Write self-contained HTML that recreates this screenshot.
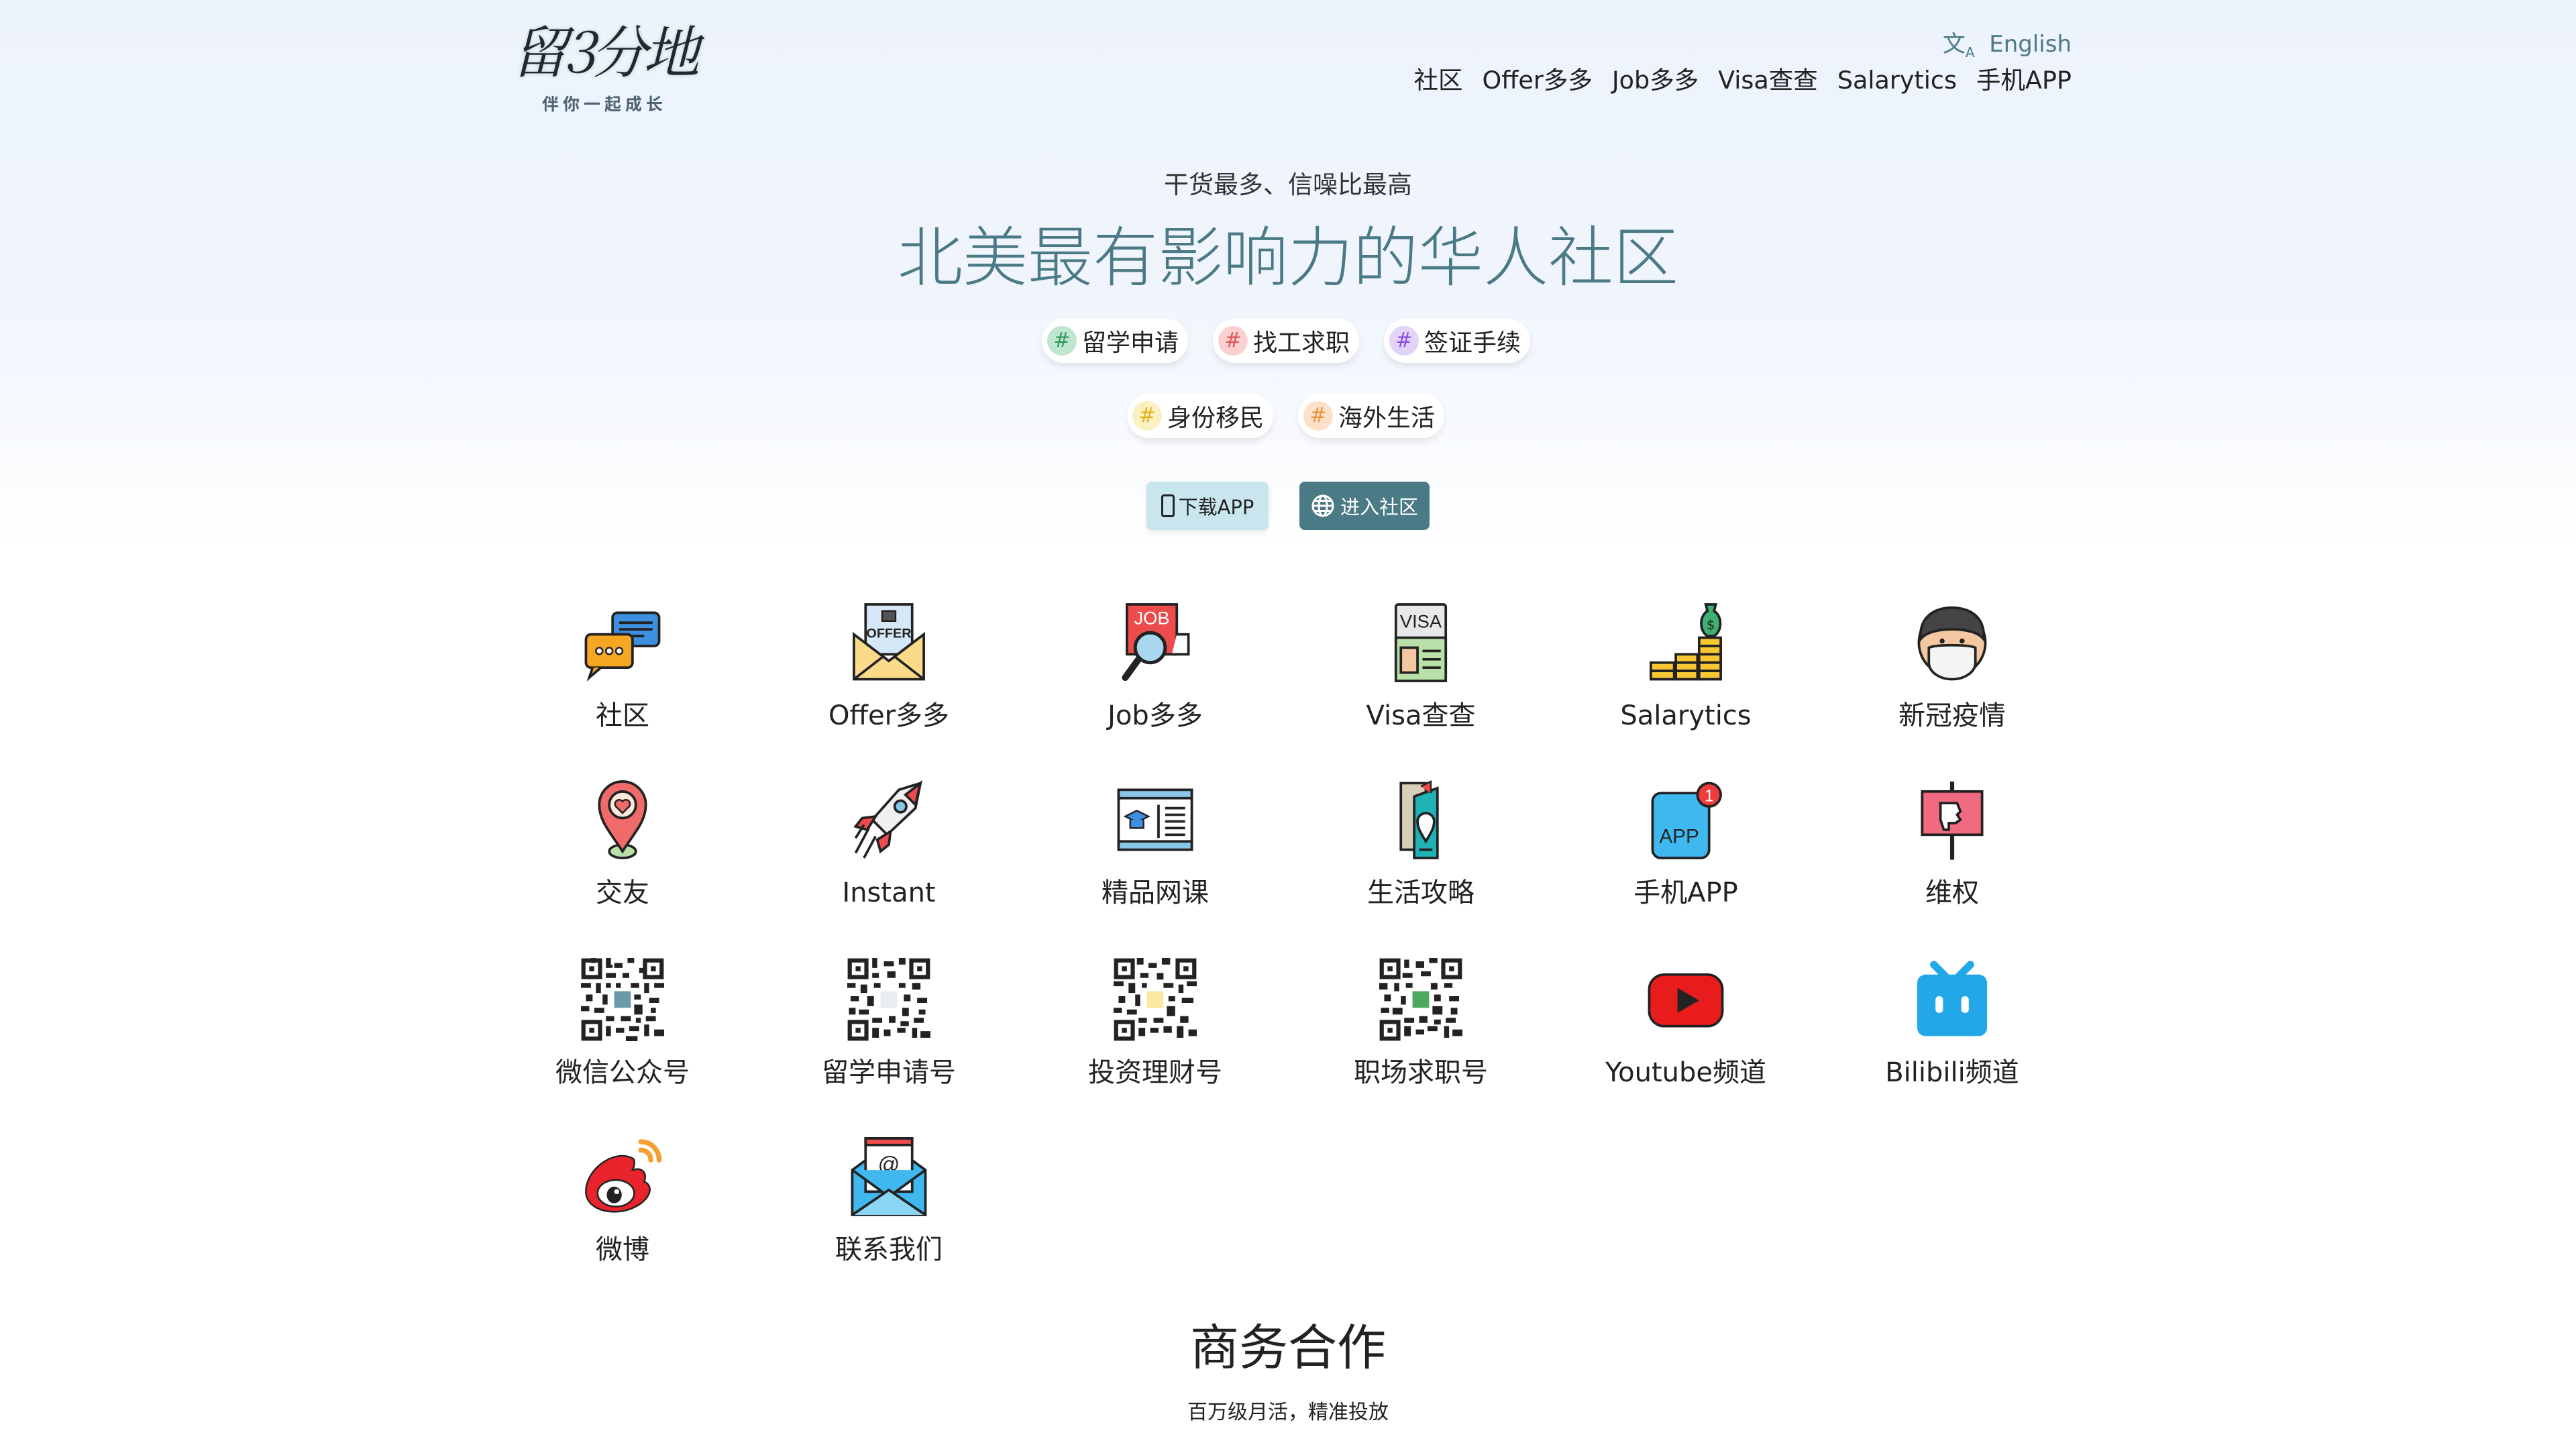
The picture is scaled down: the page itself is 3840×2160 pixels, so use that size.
<!DOCTYPE html>
<html><head><meta charset="utf-8">
<style>
*{margin:0;padding:0;box-sizing:border-box}
body{width:3840px;height:2160px;overflow:hidden;font-family:"DejaVu Sans","Liberation Sans","Noto Sans CJK SC",sans-serif;color:#222;background:linear-gradient(180deg,#edf3fd 0px,#f0f5fd 450px,#ffffff 820px,#fff 2160px);position:relative}
.abs{position:absolute}
.c{position:absolute;transform:translateX(-50%);white-space:nowrap;text-align:center}
.nav{position:absolute;right:752px;top:90px;font-size:36.5px;color:#222;white-space:nowrap}
.nav span{margin-left:29px}
.pill{position:absolute;height:66px;border-radius:33px;background:#fff;box-shadow:0 6px 10px rgba(0,0,0,.08);font-size:36px;display:flex;align-items:center;padding:0 14px 0 8px;white-space:nowrap;color:#222}
.pill i{font-style:normal;display:inline-block;width:44px;height:44px;border-radius:50%;font-size:30px;line-height:44px;text-align:center;margin-right:8px}
.item{position:absolute;width:396px;margin-left:-198px;text-align:center}
.item svg{width:124px;height:124px;display:block;margin:0 auto}
.item div{font-size:40px;margin-top:17px;height:60px;line-height:60px;color:#222;white-space:nowrap}
</style></head><body>

<div class="abs" style="left:762px;top:18px;width:290px;height:110px;white-space:nowrap;font-family:'Noto Serif CJK SC',serif;font-size:84px;line-height:110px;color:#1e2a30;font-style:italic;letter-spacing:-6px;text-shadow:0 0 6px #b9c8d0">留3分地</div>
<div class="abs" style="left:808px;top:136px;white-space:nowrap;font-size:25px;color:#4e6470;font-weight:bold;letter-spacing:6px;font-family:'Noto Sans CJK SC',sans-serif">伴你一起成长</div>

<div class="abs" style="right:752px;top:38px;font-size:34px;color:#4a7a85;white-space:nowrap">文<sub style="font-size:20px">A</sub>&nbsp; English</div>
<div class="nav">社区<span>Offer多多</span><span>Job多多</span><span>Visa查查</span><span>Salarytics</span><span>手机APP</span></div>

<div class="c" style="left:1920px;top:245px;font-size:37px;color:#333">干货最多、信噪比最高</div>
<div class="c" style="left:1920px;top:318px;font-size:97px;color:#4a7a85;line-height:1.2;font-family:'Noto Sans CJK SC',sans-serif;font-weight:300">北美最有影响力的华人社区</div>

<div class="pill" style="left:1553px;top:475px"><i style="background:#bfe6cf;color:#2e9b5c">#</i>留学申请</div>
<div class="pill" style="left:1808px;top:475px"><i style="background:#fbd0d0;color:#e05555">#</i>找工求职</div>
<div class="pill" style="left:2063px;top:475px"><i style="background:#e2d3f8;color:#8a4fe0">#</i>签证手续</div>
<div class="pill" style="left:1680px;top:587px"><i style="background:#fbf0c0;color:#e0b020">#</i>身份移民</div>
<div class="pill" style="left:1935px;top:587px"><i style="background:#fde0c8;color:#ec9440">#</i>海外生活</div>

<div class="abs" style="left:1709px;top:718px;width:182px;height:72px;border-radius:8px;background:#c9e6ee;font-size:29px;display:flex;align-items:center;justify-content:center;color:#222;box-shadow:0 4px 8px rgba(0,0,0,.08)"><span style="display:inline-block;width:20px;height:34px;border:3px solid #222;border-radius:4px;margin-right:6px"></span>下载APP</div>
<div class="abs" style="left:1937px;top:718px;width:194px;height:72px;border-radius:8px;background:#4a7a85;font-size:29px;display:flex;align-items:center;justify-content:center;color:#fff"><svg width="36" height="36" viewBox="0 0 24 24" style="margin-right:8px"><circle cx="12" cy="12" r="10" fill="none" stroke="#fff" stroke-width="2"/><ellipse cx="12" cy="12" rx="4" ry="10" fill="none" stroke="#fff" stroke-width="2"/><path d="M2 12h20M4 7h16M4 17h16" stroke="#fff" stroke-width="2"/></svg>进入社区</div>

<div class="item" style="left:928px;top:896px"><svg viewBox="0 0 100 100"><rect x="38" y="14" width="56" height="40" rx="6" fill="#3d8fe0" stroke="#222" stroke-width="3"/><path d="M46 26h40M46 34h40M46 42h30" stroke="#222" stroke-width="3"/><rect x="6" y="40" width="56" height="40" rx="6" fill="#f5a623" stroke="#222" stroke-width="3"/><path d="M14 80l-4 12 14-12" fill="#f5a623" stroke="#222" stroke-width="3"/><circle cx="22" cy="60" r="4" fill="#fff" stroke="#222" stroke-width="2"/><circle cx="34" cy="60" r="4" fill="#fff" stroke="#222" stroke-width="2"/><circle cx="46" cy="60" r="4" fill="#fff" stroke="#222" stroke-width="2"/></svg><div>社区</div></div>
<div class="item" style="left:1325px;top:896px"><svg viewBox="0 0 100 100"><rect x="22" y="4" width="56" height="60" fill="#d6e8f8" stroke="#222" stroke-width="3"/><rect x="42" y="12" width="16" height="12" fill="#555" stroke="#222" stroke-width="2"/><text x="50" y="44" font-size="16" font-weight="bold" text-anchor="middle" fill="#222" font-family="Liberation Sans">OFFER</text><path d="M8 40v54h84V40L50 72z" fill="#fbdb8a" stroke="#222" stroke-width="3"/><path d="M8 94l36-28M92 94L56 66" stroke="#222" stroke-width="3"/></svg><div>Offer多多</div></div>
<div class="item" style="left:1722px;top:896px"><svg viewBox="0 0 100 100"><rect x="16" y="4" width="60" height="60" fill="#ee4c4c" stroke="#222" stroke-width="3"/><text x="46" y="28" font-size="22" fill="#fff" text-anchor="middle" font-family="Liberation Sans">JOB</text><path d="M76 40h14v24H70" fill="#fff" stroke="#222" stroke-width="3"/><circle cx="44" cy="56" r="18" fill="#a8d8f0" stroke="#222" stroke-width="4"/><path d="M30 70L14 92" stroke="#222" stroke-width="8" stroke-linecap="round"/></svg><div>Job多多</div></div>
<div class="item" style="left:2118px;top:896px"><svg viewBox="0 0 100 100"><rect x="20" y="4" width="60" height="92" rx="3" fill="#e8e8e8" stroke="#222" stroke-width="3"/><text x="50" y="32" font-size="22" fill="#222" text-anchor="middle" font-family="Liberation Sans">VISA</text><rect x="20" y="44" width="60" height="52" fill="#b9e0a8" stroke="#222" stroke-width="3"/><rect x="26" y="56" width="20" height="30" fill="#f3c8a0" stroke="#222" stroke-width="3"/><path d="M52 60h22M52 70h22M52 80h22" stroke="#222" stroke-width="3"/></svg><div>Visa查查</div></div>
<div class="item" style="left:2513px;top:896px"><svg viewBox="0 0 100 100"><path d="M74 4h12l-2 8c10 6 10 24 0 30H76c-10-6-10-24 0-30z" fill="#3fb072" stroke="#222" stroke-width="3"/><text x="80" y="34" font-size="16" fill="#222" text-anchor="middle">$</text><g fill="#f8c630" stroke="#222" stroke-width="3"><rect x="66" y="44" width="26" height="10"/><rect x="66" y="54" width="26" height="10"/><rect x="66" y="64" width="26" height="10"/><rect x="66" y="74" width="26" height="10"/><rect x="66" y="84" width="26" height="10"/><rect x="38" y="64" width="26" height="10"/><rect x="38" y="74" width="26" height="10"/><rect x="38" y="84" width="26" height="10"/><rect x="8" y="74" width="28" height="10"/><rect x="8" y="84" width="28" height="10"/></g></svg><div>Salarytics</div></div>
<div class="item" style="left:2910px;top:896px"><svg viewBox="0 0 100 100"><circle cx="50" cy="50" r="40" fill="#f3c8a0" stroke="#222" stroke-width="3"/><path d="M12 46C10 18 30 8 50 8s40 10 38 38c-6-8-20-12-38-12S18 38 12 46z" fill="#444" stroke="#222" stroke-width="3"/><path d="M22 56c10-4 46-4 56 0v18c0 12-14 20-28 20s-28-8-28-20z" fill="#f4f4f4" stroke="#222" stroke-width="3"/><circle cx="38" cy="48" r="3" fill="#222"/><circle cx="62" cy="48" r="3" fill="#222"/></svg><div>新冠疫情</div></div>

<div class="item" style="left:928px;top:1160px"><svg viewBox="0 0 100 100"><ellipse cx="50" cy="88" rx="16" ry="8" fill="#b9e0a8" stroke="#222" stroke-width="3"/><path d="M50 88C36 66 22 52 22 32a28 28 0 0 1 56 0c0 20-14 34-28 56z" fill="#f06a6a" stroke="#222" stroke-width="3"/><circle cx="50" cy="32" r="16" fill="#fde8d8" stroke="#222" stroke-width="3"/><path d="M50 42l-8-8a5 5 0 0 1 8-6 5 5 0 0 1 8 6z" fill="#f06a6a" stroke="#222" stroke-width="2"/></svg><div>交友</div></div>
<div class="item" style="left:1325px;top:1160px"><svg viewBox="0 0 100 100"><path d="M88 6L62 14 30 50l18 18 34-32z" fill="#f0f0f0" stroke="#222" stroke-width="3"/><path d="M88 6L82 32 70 20z" fill="#ee4c4c" stroke="#222" stroke-width="3"/><circle cx="64" cy="34" r="7" fill="#8ac6e8" stroke="#222" stroke-width="3"/><path d="M34 46l-16 2-8 10 14 4zM52 64l-2 16-10 8-4-14z" fill="#ee4c4c" stroke="#222" stroke-width="3"/><path d="M26 60L10 90M34 70L20 96M20 56l-10 16" stroke="#222" stroke-width="3"/></svg><div>Instant</div></div>
<div class="item" style="left:1722px;top:1160px"><svg viewBox="0 0 100 100"><rect x="6" y="14" width="88" height="72" fill="#fff" stroke="#222" stroke-width="3"/><rect x="6" y="14" width="88" height="10" fill="#8ac6e8" stroke="#222" stroke-width="3"/><rect x="6" y="76" width="88" height="10" fill="#8ac6e8" stroke="#222" stroke-width="3"/><path d="M14 46l14-7 14 7-14 7z" fill="#3d8fe0" stroke="#222" stroke-width="2"/><path d="M20 50v10h16V50" fill="#3d8fe0" stroke="#222" stroke-width="2"/><path d="M54 32v40M62 36h24M62 44h24M62 52h24M62 60h24M62 68h24" stroke="#222" stroke-width="3"/></svg><div>精品网课</div></div>
<div class="item" style="left:2118px;top:1160px"><svg viewBox="0 0 100 100"><path d="M26 6h30v80H26z" fill="#d8cfb8" stroke="#222" stroke-width="3"/><path d="M42 22l28-10v84H42z" fill="#1fb3b8" stroke="#222" stroke-width="3"/><path d="M50 10l12-6v14" fill="#ee4c4c" stroke="#222" stroke-width="2"/><path d="M56 76c-6-10-10-16-10-24a10 10 0 0 1 20 0c0 8-4 14-10 24z" fill="#fff" stroke="#222" stroke-width="3"/><path d="M48 86h16" stroke="#222" stroke-width="3"/></svg><div>生活攻略</div></div>
<div class="item" style="left:2513px;top:1160px"><svg viewBox="0 0 100 100"><rect x="10" y="18" width="68" height="78" rx="10" fill="#3fb8f0" stroke="#222" stroke-width="3"/><text x="42" y="78" font-size="24" fill="#222" text-anchor="middle" font-family="Liberation Sans">APP</text><circle cx="78" cy="20" r="14" fill="#ee3c3c" stroke="#222" stroke-width="3"/><text x="78" y="28" font-size="20" fill="#fff" text-anchor="middle" font-family="Liberation Sans">1</text></svg><div>手机APP</div></div>
<div class="item" style="left:2910px;top:1160px"><svg viewBox="0 0 100 100"><path d="M50 4v94" stroke="#222" stroke-width="5"/><rect x="14" y="16" width="72" height="52" fill="#f06a80" stroke="#222" stroke-width="3"/><path d="M36 30h20l4 10-4 4 4 6-6 4h-8v8h-6l-4-12z" fill="#fff" stroke="#222" stroke-width="3"/></svg><div>维权</div></div>

<div class="item" style="left:928px;top:1428px"><svg viewBox="0 0 100 100"><rect width="100" height="100" fill="#fff"/><path d="M12 0h6v6h-6zM30 0h6v12h-6zM40 6h10v6H40zM56 0h8v6h-8zM70 12h6v6h-6zM30 18h12v6H30zM50 18h8v6h-8zM0 30h12v6H0zM18 30h6v12h-6zM30 30h6v6h-6zM42 30h6v6h-6zM60 30h10v6H60zM76 30h6v12h-6zM88 30h12v6H88zM6 44h8v8H6zM26 44h6v12h-6zM64 44h8v6h-8zM82 48h12v6H82zM0 58h10v6H0zM16 60h12v6H16zM64 56h10v12H64zM84 60h6v6h-6zM30 70h10v6H30zM48 70h12v6H48zM66 72h6v6h-6zM78 70h12v6H78zM30 82h6v12h-6zM42 84h10v6H42zM58 82h12v6H58zM76 80h6v14h-6zM88 86h12v8H88zM54 94h14v6H54zM34 8h4v4h-4z" fill="#222"/><g fill="none" stroke="#222" stroke-width="5"><rect x="3" y="3" width="20" height="20"/><rect x="77" y="3" width="20" height="20"/><rect x="3" y="77" width="20" height="20"/></g><path d="M10 10h6v6h-6zM84 10h6v6h-6zM10 84h6v6h-6z" fill="#222"/><rect x="40" y="40" width="20" height="20" fill="#6a9aa8"/></svg><div>微信公众号</div></div>
<div class="item" style="left:1325px;top:1428px"><svg viewBox="0 0 100 100"><rect width="100" height="100" fill="#fff"/><path d="M30 0h6v12h-6zM44 4h12v6H44zM62 0h8v8h-8zM30 18h8v6h-8zM48 16h10v8H48zM0 30h10v6H0zM16 32h8v10h-8zM32 30h8v6h-8zM62 30h8v6h-8zM78 30h10v8H78zM4 46h10v6H4zM24 46h8v12h-8zM68 44h8v8h-8zM84 48h12v6H84zM2 60h8v8H2zM14 62h12v6H14zM66 60h8v10h-8zM86 62h8v6h-8zM30 72h12v6H30zM50 70h8v8h-8zM64 76h10v6H64zM80 72h12v6H80zM30 84h8v12h-8zM44 86h8v8h-8zM60 84h10v6H60zM78 84h6v12h-6zM88 88h12v8H88z" fill="#222"/><g fill="none" stroke="#222" stroke-width="5"><rect x="3" y="3" width="20" height="20"/><rect x="77" y="3" width="20" height="20"/><rect x="3" y="77" width="20" height="20"/></g><path d="M10 10h6v6h-6zM84 10h6v6h-6zM10 84h6v6h-6z" fill="#222"/><rect x="40" y="40" width="20" height="20" fill="#e8eef0"/></svg><div>留学申请号</div></div>
<div class="item" style="left:1722px;top:1428px"><svg viewBox="0 0 100 100"><rect width="100" height="100" fill="#fff"/><path d="M28 0h8v8h-8zM42 6h10v6H42zM58 0h10v8H58zM32 18h10v6H32zM52 18h8v8h-8zM0 28h12v6H0zM18 30h8v12h-8zM34 30h6v6h-6zM60 30h12v6H60zM78 32h6v10h-6zM88 28h12v6H88zM6 46h8v8H6zM26 44h6v14h-6zM66 46h8v6h-8zM82 48h14v6H82zM0 60h10v6H0zM16 62h12v6H16zM64 58h10v12H64zM30 72h10v6H30zM48 72h12v6H48zM80 70h10v8H80zM30 84h8v10h-8zM44 84h10v6H44zM60 82h10v8H60zM76 82h8v14h-8zM90 86h10v8H90z" fill="#222"/><g fill="none" stroke="#222" stroke-width="5"><rect x="3" y="3" width="20" height="20"/><rect x="77" y="3" width="20" height="20"/><rect x="3" y="77" width="20" height="20"/></g><path d="M10 10h6v6h-6zM84 10h6v6h-6zM10 84h6v6h-6z" fill="#222"/><rect x="40" y="40" width="20" height="20" fill="#f8e8a0"/></svg><div>投资理财号</div></div>
<div class="item" style="left:2118px;top:1428px"><svg viewBox="0 0 100 100"><rect width="100" height="100" fill="#fff"/><path d="M30 2h6v10h-6zM44 4h10v8H44zM60 0h10v6H60zM28 18h12v6H28zM50 16h12v6H50zM0 30h10v8H0zM18 30h6v10h-6zM32 30h8v6h-8zM62 30h8v8h-8zM78 30h10v6H78zM6 44h8v8H6zM26 46h6v10h-6zM66 44h8v8h-8zM84 46h12v6H84zM2 60h10v6H2zM16 60h12v8H16zM64 58h12v10H64zM86 60h8v8h-8zM30 72h12v6H30zM48 70h10v8H48zM66 74h8v6h-8zM80 72h12v6H80zM30 82h8v12h-8zM44 86h10v6H44zM58 82h12v6H58zM78 82h6v14h-6zM88 86h12v8H88z" fill="#222"/><g fill="none" stroke="#222" stroke-width="5"><rect x="3" y="3" width="20" height="20"/><rect x="77" y="3" width="20" height="20"/><rect x="3" y="77" width="20" height="20"/></g><path d="M10 10h6v6h-6zM84 10h6v6h-6zM10 84h6v6h-6z" fill="#222"/><rect x="40" y="40" width="20" height="20" fill="#4aa860"/></svg><div>职场求职号</div></div>
<div class="item" style="left:2513px;top:1428px"><svg viewBox="0 0 100 100"><rect x="6" y="20" width="88" height="62" rx="18" fill="#e81c1c" stroke="#222" stroke-width="3"/><path d="M40 36v30l26-15z" fill="#222"/></svg><div>Youtube频道</div></div>
<div class="item" style="left:2910px;top:1428px"><svg viewBox="0 0 100 100"><path d="M28 8l14 14M72 8L58 22" stroke="#22a8e8" stroke-width="9" stroke-linecap="round"/><rect x="8" y="20" width="84" height="74" rx="10" fill="#22a8e8"/><rect x="30" y="46" width="9" height="20" rx="4" fill="#fff"/><rect x="61" y="46" width="9" height="20" rx="4" fill="#fff"/></svg><div>Bilibili频道</div></div>

<div class="item" style="left:928px;top:1692px"><svg viewBox="0 0 100 100"><path d="M62 28C40 16 4 42 6 70c2 20 30 26 50 20 26-8 34-28 20-34 4-10-2-18-14-14 4-8 2-14 0-14z" fill="#e8232b" stroke="#222" stroke-width="2"/><ellipse cx="42" cy="70" rx="22" ry="16" fill="#fff" stroke="#222" stroke-width="2"/><ellipse cx="40" cy="72" rx="9" ry="10" fill="#222"/><circle cx="43" cy="68" r="3" fill="#fff"/><path d="M72 8a22 22 0 0 1 22 22M72 18a12 12 0 0 1 12 12" fill="none" stroke="#f5a030" stroke-width="6" stroke-linecap="round"/></svg><div>微博</div></div>
<div class="item" style="left:1325px;top:1692px"><svg viewBox="0 0 100 100"><path d="M6 42l44-32 44 32v54H6z" fill="#3fb8f0" stroke="#222" stroke-width="3"/><rect x="22" y="4" width="56" height="64" fill="#fff" stroke="#222" stroke-width="3"/><rect x="22" y="4" width="56" height="8" fill="#ee4c4c" stroke="#222" stroke-width="3"/><text x="50" y="44" font-size="26" fill="#222" text-anchor="middle" font-family="Liberation Sans">@</text><path d="M6 42l44 32 44-32" fill="#3fb8f0" stroke="#222" stroke-width="3"/><path d="M6 96l44-30 44 30" fill="#8ad4f4" stroke="#222" stroke-width="3"/></svg><div>联系我们</div></div>

<div class="c" style="left:1920px;top:1950px;font-size:73px;color:#222">商务合作</div>
<div class="c" style="left:1920px;top:2080px;font-size:30px;color:#222">百万级月活，精准投放</div>
</body></html>
